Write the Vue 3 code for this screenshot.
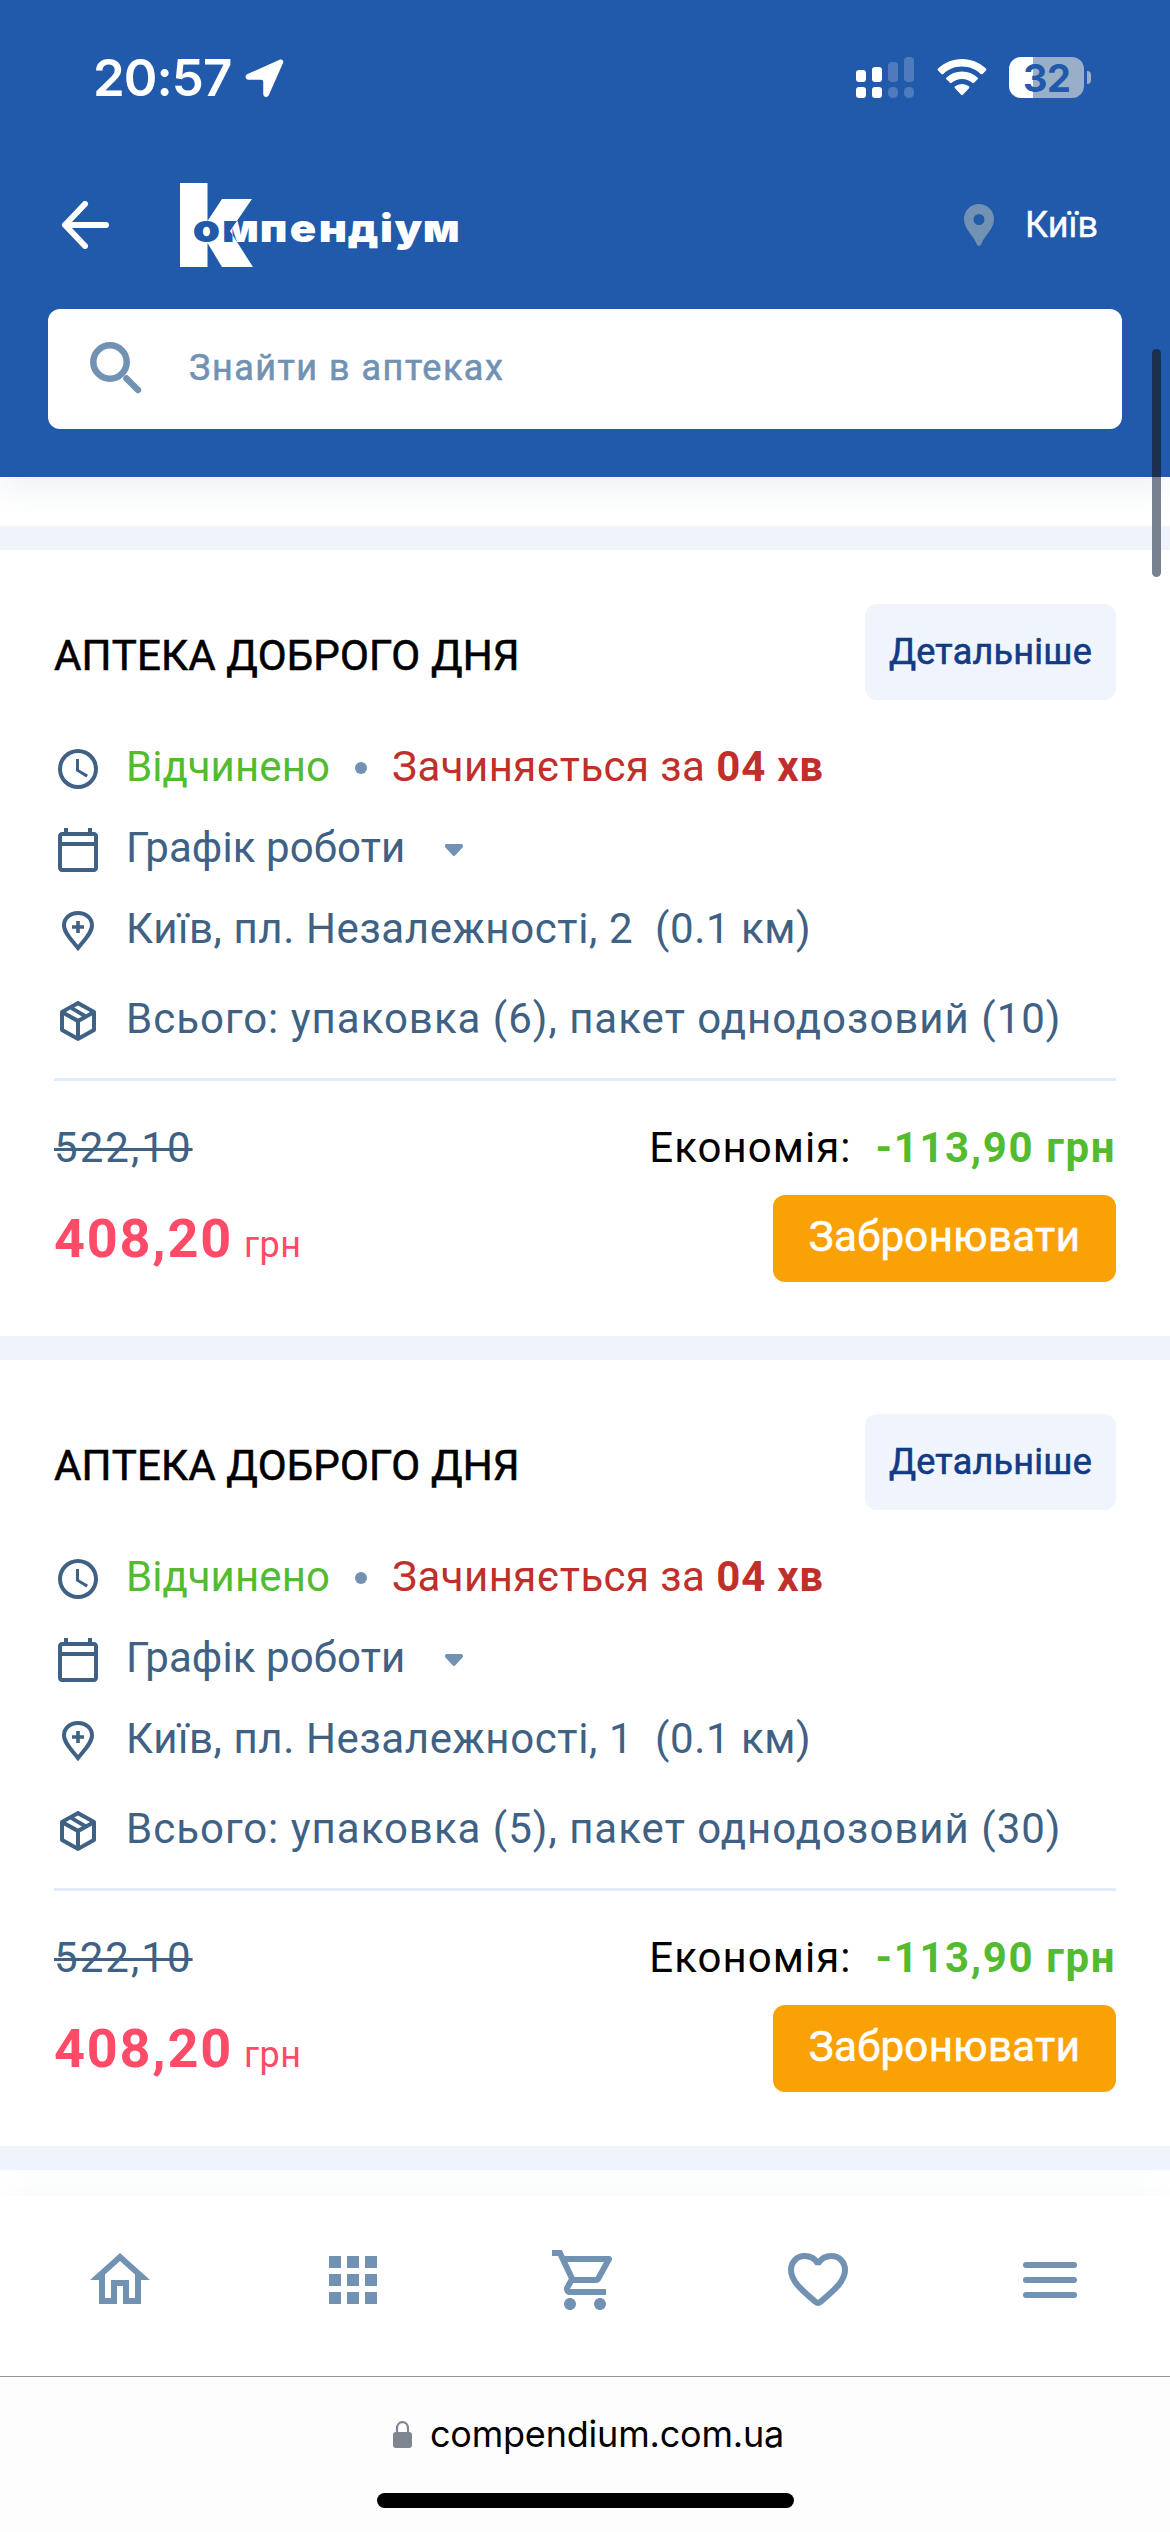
<script setup>
const pharmacies = [
  { id: 1, name: 'АПТЕКА ДОБРОГО ДНЯ', address: 'Київ, пл. Незалежності, 2', distance: '(0.1 км)', stock: 'Всього: упаковка (6), пакет однодозовий (10)' },
  { id: 2, name: 'АПТЕКА ДОБРОГО ДНЯ', address: 'Київ, пл. Незалежності, 1', distance: '(0.1 км)', stock: 'Всього: упаковка (5), пакет однодозовий (30)' },
]
</script>

<template>
  <div class="screen">
    <header class="header">
      <div class="status">
        <span class="time">20:57</span>
        <svg class="nav-arrow" viewBox="0 0 40 40"><path d="M36 .6c2-.8 3.8.8 3.2 3L24.5 37c-1 2.800-5.800 2.600-5.800-1V23.500c0-1.400-.7-2.200-2.200-2.200H4c-3.800 0-4.600-4.300-1.400-5.800z" /></svg>
        <div class="status-right">
          <svg class="signal" viewBox="0 0 58 42">
            <g fill="#fff">
              <rect x="0" y="13" width="10" height="12" rx="3" /><rect x="16" y="10" width="10" height="15" rx="3" />
              <rect x="0" y="30" width="10" height="11" rx="3" /><rect x="16" y="30" width="10" height="11" rx="3" />
            </g>
            <g fill="#4f7abc">
              <rect x="32" y="5" width="10" height="20" rx="4" /><rect x="48" y="0" width="10" height="25" rx="4" />
              <rect x="32" y="30" width="10" height="11" rx="4.500" /><rect x="48" y="30" width="10" height="11" rx="4.500" />
            </g>
          </svg>
          <svg class="wifi" viewBox="0 0 50 38">
            <path d="M25 0C34.500 0 43.200 3.700 49.600 9.800c.6.600.6 1.300 0 1.900l-3.500 3.600c-.6.600-1.300.6-1.900 0C39.200 10.500 32.500 7.700 25 7.700S10.800 10.500 5.800 15.300c-.6.600-1.300.600-1.900 0L.4 11.700c-.6-.6-.6-1.300 0-1.900C6.800 3.700 15.500 0 25 0z" />
            <path d="M25 12.800c6.100 0 11.700 2.300 15.900 6.100.6.600.7 1.300.1 1.900l-3.700 3.700c-.6.500-1.200.5-1.800 0-2.800-2.500-6.500-4-10.500-4s-7.700 1.500-10.500 4c-.6.500-1.200.5-1.800 0L9 20.800c-.6-.6-.5-1.300.1-1.900 4.200-3.800 9.800-6.100 15.900-6.100z" />
            <path d="M25 25.600c2.700 0 5.100.9 7.100 2.500.7.600.7 1.300.1 1.900l-6.300 6.800c-.6.600-1.200.6-1.800 0L17.800 30c-.6-.6-.6-1.300.1-1.900 2-1.600 4.400-2.500 7.100-2.500z" />
          </svg>
          <div class="battery"><span class="level">32</span><i class="nub"></i></div>
        </div>
      </div>

      <div class="brand-row">
        <svg class="back" viewBox="0 0 48 48"><path d="M45 24H4M24 3 4 24l20 21" fill="none" stroke="#fff" stroke-width="6" stroke-linecap="round" stroke-linejoin="round" /></svg>
        <svg class="logo" viewBox="178 181 284 88">
          <defs>
            <clipPath id="k-clip"><path d="M180 183h27.500v38l14.500-22h30l-22 32 23 36H222l-14.500-24v24H180z" /></clipPath>
            <g id="logo-word">
              <text class="logo-text" transform="scale(1.12 1)" y="242" x="172 198.200 232 258.800 284.500 310.500 339.200 352.300 377.500">омпендіум</text>
            </g>
          </defs>
          <path fill="#fff" d="M180 183h27.500v38l14.500-22h30l-22 32 23 36H222l-14.500-24v24H180z" />
          <use href="#logo-word" fill="#fff" />
          <use href="#logo-word" fill="#2159ab" clip-path="url(#k-clip)" />
        </svg>
        <div class="city">
          <svg class="pin" viewBox="0 0 30 42"><path fill-rule="evenodd" d="M15 0c8.400 0 15 6.700 15 15 0 10-9 16-12.600 24.700-1 2.800-3.800 2.800-4.800 0C9 31 0 25 0 15 0 6.700 6.600 0 15 0zm0 10a5.500 5.500 0 1 0 0 11 5.500 5.500 0 0 0 0-11z" /></svg>
          <span>Київ</span>
        </div>
      </div>

      <div class="search">
        <svg viewBox="0 0 52 52"><circle cx="20" cy="20" r="16.700" /><path d="M36.500 36.500 48 48" /></svg>
        <span>Знайти в аптеках</span>
      </div>
    </header>

    <main class="list">
      <article v-for="p in pharmacies" :key="p.id" class="card">
        <div class="card-head">
          <h2>{{ p.name }}</h2>
          <button class="details">Детальніше</button>
        </div>
        <div class="row">
          <svg viewBox="0 0 24 24"><path d="M12 2a10 10 0 1 0 0 20 10 10 0 0 0 0-20m0 18a8 8 0 1 1 0-16 8 8 0 0 1 0 16m.5-13H11v6l5.200 3.200.8-1.300-4.500-2.700z" /></svg>
          <span class="open">Відчинено</span><i class="dot"></i>
          <span class="closing">Зачиняється за</span><b class="left-time">04 хв</b>
        </div>
        <div class="row">
          <svg viewBox="0 0 24 24"><path d="M20 3h-1V1h-2v2H7V1H5v2H4c-1.100 0-2 .9-2 2v16c0 1.100.9 2 2 2h16c1.100 0 2-.9 2-2V5c0-1.100-.9-2-2-2m0 18H4V10h16zm0-13H4V5h16z" /></svg>
          <span class="schedule">Графік роботи</span>
          <svg class="caret" viewBox="0 0 18 12"><path d="M1.500 0h15C18 0 18 1.500 18 3l-7.600 8.200c-.8 1-2 1-2.800 0L0 3C0 1.500 0 0 1.500 0z" /></svg>
        </div>
        <div class="row">
          <svg viewBox="0 0 24 24"><path fill="none" stroke="currentColor" stroke-width="2" d="M12 20.500c-2.500-3.300-7-7.500-7-11.300C5 5.700 8 3 12 3s7 2.700 7 6.200c0 3.800-4.500 8-7 11.300z" /><path d="M11.100 7h1.800v2.100H15v1.800h-2.100V13h-1.800v-2.100H9V9.100h2.100z" /></svg>
          <span class="address">{{ p.address }}</span><span class="distance">{{ p.distance }}</span>
        </div>
        <div class="row stock">
          <svg viewBox="0 0 24 24"><path d="M21 16.500c0 .4-.2.700-.5.900l-7.900 4.400c-.4.300-.8.300-1.200 0l-7.900-4.400c-.3-.2-.5-.5-.5-.9v-9c0-.4.200-.7.500-.9l7.900-4.400c.4-.3.800-.3 1.200 0l7.900 4.400c.3.200.5.500.5.900zM12 4.200l-1.900 1 5.900 3.400 2-1.100zM6 7.500l6 3.300 2-1.100-5.900-3.400zM5 15.900l6 3.400v-6.700L5 9.200zm14 0V9.200l-6 3.400v6.700z" /></svg>
          <span class="total">{{ p.stock }}</span>
        </div>
        <div class="price-top">
          <s>522,10</s>
          <span class="saving">Економія:</span><b>-113,90 грн</b>
        </div>
        <div class="price-bottom">
          <div class="price"><b>408,20</b><span>грн</span></div>
          <button class="book">Забронювати</button>
        </div>
      </article>
    </main>

    <nav class="tabs">
      <svg viewBox="0 0 24 24"><path d="m12 5.700 5 4.500V18h-2v-6H9v6H7v-7.800zM12 3 2 12h3v8h6v-6h2v6h6v-8h3z" /></svg>
      <svg viewBox="0 0 24 24"><path d="M4 8h4V4H4zm6 12h4v-4h-4zm-6 0h4v-4H4zm0-6h4v-4H4zm6 0h4v-4h-4zm6-10v4h4V4zm-6 4h4V4h-4zm6 6h4v-4h-4zm0 6h4v-4h-4z" /></svg>
      <svg viewBox="0 0 24 24"><path d="M15.550 13c.75 0 1.410-.41 1.750-1.030l3.580-6.490A.996.996 0 0 0 20.010 4H5.210l-.94-2H1v2h2l3.600 7.590-1.350 2.440C4.520 15.370 5.480 17 7 17h12v-2H7l1.100-2zM6.160 6h12.150l-2.760 5H8.530zM7 18c-1.100 0-1.990.9-1.990 2S5.900 22 7 22s2-.9 2-2-.9-2-2-2m10 0c-1.100 0-1.990.9-1.990 2s.89 2 1.990 2 2-.9 2-2-.9-2-2-2" /></svg>
      <svg viewBox="0 0 24 24"><path d="M12 6.600C11 4.800 9.400 4 7.500 4 4.900 4 3 6.100 3 8.700c0 3.500 3 6.200 8.200 10.600.5.500 1.100.5 1.600 0C18 14.900 21 12.200 21 8.700 21 6.100 19.100 4 16.500 4c-1.900 0-3.500.8-4.500 2.600z" fill="none" stroke="currentColor" stroke-width="2" stroke-linejoin="bevel" /></svg>
      <svg viewBox="0 0 24 24"><path d="M4 7h16M4 12h16M4 17h16" stroke="currentColor" stroke-width="2" stroke-linecap="round" /></svg>
    </nav>

    <footer class="browser">
      <div class="url">
        <svg viewBox="0 0 19 27"><path d="M4 12V7.500C4 3.800 6.200 1.100 9.500 1.100S15 3.800 15 7.500V12" fill="none" stroke="#7f8691" stroke-width="2.200" /><rect y="11" width="19" height="16" rx="3" fill="#7f8691" /></svg>
        <span>compendium.com.ua</span>
      </div>
      <div class="home-bar"></div>
    </footer>
    <div class="scrollbar"></div>
  </div>
</template>

<style>
body { background: #fff; }
</style>

<style scoped>
.screen { position: relative; width: 1170px; height: 2532px; overflow: hidden; display: flex; flex-direction: column; background: #fff; font-family: Roboto, sans-serif; color: #3e6184; }
* { box-sizing: border-box; }
button { border: 0; font-family: inherit; }
.header { position: relative; z-index: 1; flex: none; height: 477px; background: #2159ab; color: #fff; box-shadow: 0 15px 30px -2px rgba(62, 108, 142, .09); }
.status { height: 156px; display: flex; align-items: center; padding: 0 86px 0 93px; }
.time { font: 600 51px/60px Inter, sans-serif; letter-spacing: -.95px; width: 152px; }
.nav-arrow { width: 39px; height: 39px; fill: #fff; }
.status-right { margin-left: auto; display: flex; align-items: flex-start; }
.signal { width: 58px; height: 42px; margin-right: 23px; }
.wifi { width: 50px; height: 37px; margin: 2px 22px 0 0; fill: #fff; }
.battery { position: relative; width: 75px; height: 41px; border-radius: 12px; background: linear-gradient(90deg, #fff 24px, #98aec9 24px); }
.level { display: block; padding-left: 14px; font: 700 38px/42px Inter, sans-serif; letter-spacing: -.5px; color: #2159ab; }
.nub { position: absolute; left: 78px; top: 14px; width: 4px; height: 13px; border-radius: 0 5px 5px 0; background: #98aec9; }
.brand-row { height: 138px; display: flex; align-items: center; padding: 0 72px 0 61px; }
.back { width: 48px; height: 48px; }
.logo { width: 284px; height: 88px; margin-left: 69px; }
.logo-text { font: 900 39px Inter, sans-serif; }
.city { margin-left: auto; display: flex; align-items: center; gap: 31px; font-size: 36px; line-height: 42px; -webkit-text-stroke: .4px currentColor; }
.pin { width: 30px; height: 42px; fill: #7192b2; }
.search { margin: 15px 48px 0; height: 120px; border-radius: 12px; background: #fff; display: flex; align-items: center; padding: 0 42px 2px; color: #7192b2; font-size: 36px; letter-spacing: 1.5px; }
.search span { -webkit-text-stroke: .6px currentColor; }
.search svg { width: 52px; height: 52px; margin-right: 47px; fill: none; stroke: #7192b2; stroke-width: 6.500; stroke-linecap: round; }
.list { flex: none; padding-top: 49px; border-bottom: 24px solid #eff3fc; }
.card { height: 810px; border-top: 24px solid #eff3fc; padding: 54px 54px 0; }
.card-head { display: flex; justify-content: space-between; height: 96px; }
h2 { margin: 0; padding-top: 7px; font-size: 42px; font-weight: 400; line-height: 90px; letter-spacing: .18px; color: #000; -webkit-text-stroke: .6px currentColor; }
.details { width: 251px; height: 96px; padding: 0; border-radius: 12px; background: #f0f4fc; color: #123b84; font-size: 36px; letter-spacing: .25px; -webkit-text-stroke: .6px currentColor; }
.row { height: 81px; display: flex; align-items: center; font-size: 42px; line-height: 81px; white-space: pre; }
.card-head + .row { margin-top: 26px; }
.row > svg:first-child { width: 48px; height: 48px; margin-right: 24px; fill: currentColor; position: relative; top: 2px; }
.open { color: #52bb30; letter-spacing: .11px; }
.dot { width: 12px; height: 12px; border-radius: 50%; background: #7192b2; margin: 3px 25px 0 25px; }
.closing { color: #c02f2a; letter-spacing: .42px; }
.left-time { color: #c02f2a; letter-spacing: .75px; margin-left: 11px; }
.schedule { letter-spacing: .09px; }
.caret { width: 18px; height: 12px; margin: 5px 0 0 40px; fill: #7192b2; }
.address { letter-spacing: .61px; }
.distance { letter-spacing: .58px; margin-left: 22px; }
.stock { margin-top: 9px; height: 103px; padding-bottom: 19px; border-bottom: 3px solid #e1eaf8; }
.total { letter-spacing: 1px; }
.price-top { height: 60px; margin-top: 37px; display: flex; align-items: baseline; font-size: 42px; line-height: 60px; letter-spacing: 1.050px; }
.price-top s { letter-spacing: 2.050px; text-decoration-thickness: 3px; }
.saving { margin-left: auto; color: #000; }
.price-top b { margin-left: 24px; color: #52bb30; letter-spacing: 1.600px; }
.price-bottom { height: 87px; margin-top: 17px; display: flex; justify-content: space-between; }
.price { color: #ff4a68; line-height: 87px; }
.price b { font-size: 54px; letter-spacing: 1.800px; }
.price span { font-size: 36px; margin-left: 11px; letter-spacing: .5px; }
.book { width: 343px; padding: 0 0 4px; border-radius: 12px; background: #faa205; color: #fff; font-size: 42px; letter-spacing: .35px; -webkit-text-stroke: .6px currentColor; }
.tabs { position: relative; flex: none; margin-top: 26px; height: 180px; padding: 48px 84px 0; display: flex; justify-content: space-between; background: #fff; box-shadow: 0 -10px 30px -4px rgba(62, 98, 132, .04); }
.tabs svg { width: 72px; height: 72px; fill: #7192b2; color: #7192b2; }
.browser { position: relative; flex: none; height: 156px; border-top: 1px solid #939598; background: #fdfdfe; display: flex; flex-direction: column; align-items: center; }
.url { margin-top: 33px; height: 48px; padding-left: 7px; display: flex; align-items: center; font: 36px/48px Inter, sans-serif; letter-spacing: -.2px; color: #000; }
.url svg { width: 19px; height: 27px; margin-right: 18px; }
.home-bar { width: 417px; height: 15px; border-radius: 8px; background: #000; margin-top: 35px; }
.scrollbar { position: absolute; z-index: 2; left: 1152px; top: 349px; width: 9px; height: 228px; border-radius: 5px; background: linear-gradient(#1b2f50 128px, #778190 128px); }
</style>
